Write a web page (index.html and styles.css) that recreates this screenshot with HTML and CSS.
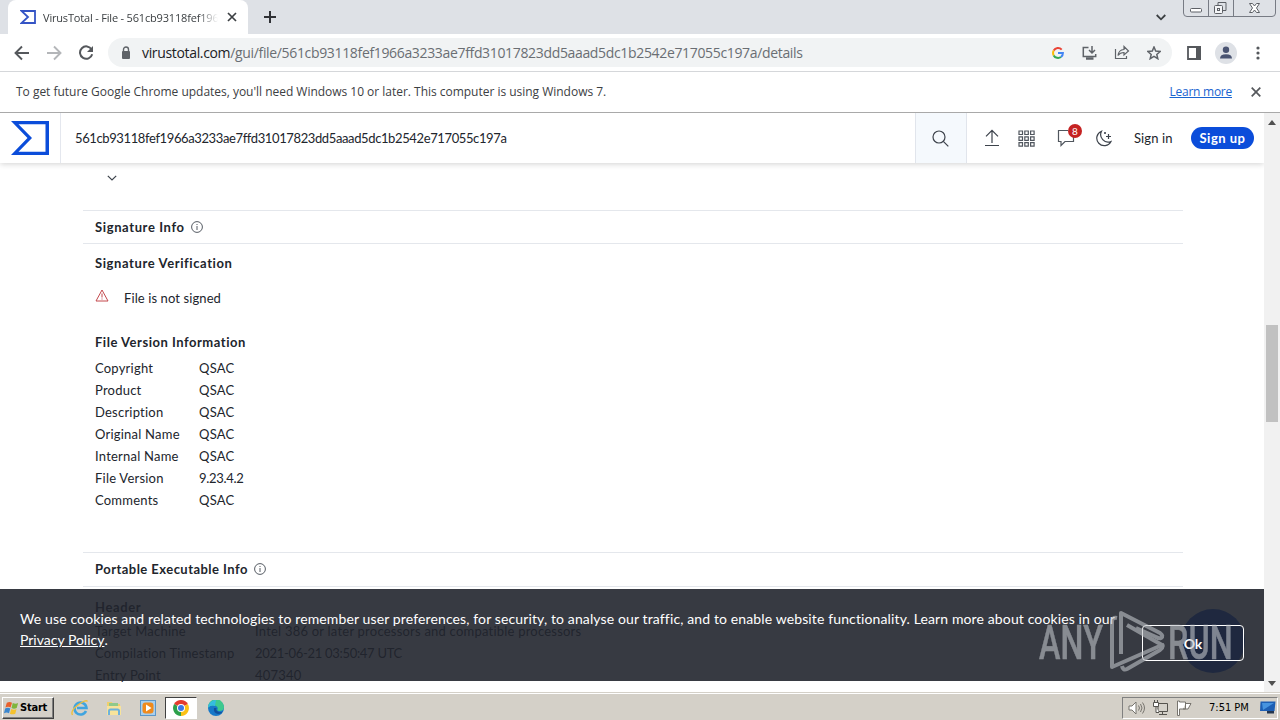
FILE: index.html
```html
<!DOCTYPE html>
<html lang="en">
<head>
  <meta charset="UTF-8">
  <title>VirusTotal - File</title>
  <meta name="viewport" content="width=device-width, initial-scale=1.0">
  <link rel="stylesheet" href="styles.css">
</head>
<body>

  <div class="tabstrip">
    <div class="tab">
      <svg class="favicon" width="16" height="14" viewBox="0 0 16 14"><path d="M1.5 1H15v12H1.5L8 7z" fill="none" stroke="#3454c5" stroke-width="1.8"/></svg>
      <span class="tab-title">VirusTotal - File - 561cb93118fef1966</span>
      <svg width="10" height="10" viewBox="0 0 10 10"><path d="M1 1l8 8M9 1L1 9" stroke="#3c4043" stroke-width="1.7"/></svg>
    </div>
    <svg class="new-tab" width="12" height="12" viewBox="0 0 12 12"><path d="M6 0v12M0 6h12" stroke="#303236" stroke-width="2"/></svg>
    <svg class="tab-search" width="10" height="7" viewBox="0 0 10 7"><path d="M.7 1L5 5.3 9.3 1" fill="none" stroke="#3c4043" stroke-width="1.8"/></svg>
    <svg class="window-buttons" width="94" height="18" viewBox="0 0 94 18" fill="none" stroke="#777b84">
      <path d="M.5 0v13q0 3.5 3.5 3.5h85q3.5 0 3.5-3.5V0M25.500 0v16M50.500 0v16"/>
      <rect x="7.500" y="8.500" width="11" height="3.500" rx="1" fill="#fff" stroke="#5d6066"/>
      <path d="M35 5V2.500h8v8h-3" stroke="#5d6066"/>
      <rect x="31.500" y="5.500" width="8" height="8" rx="1" fill="#f4f5f7" stroke="#5d6066"/>
      <rect x="34.500" y="8.500" width="2" height="2" stroke="#5d6066"/>
      <path d="M66.500 3.500h3l2 2.500 2-2.500h3l-3 4.500 3 4.500h-3l-2-2.500-2 2.500h-3l3-4.500z" fill="#fff" stroke="#5d6066"/>
    </svg>
  </div>

  <div class="toolbar">
    <svg width="16" height="16" viewBox="0 0 16 16"><path d="M15 8H2M8 1.500L1.500 8 8 14.500" fill="none" stroke="#55585c" stroke-width="1.900"/></svg>
    <svg width="16" height="16" viewBox="0 0 16 16"><path d="M1 8h13M8 1.500L14.500 8 8 14.500" fill="none" stroke="#b4b6b9" stroke-width="1.900"/></svg>
    <svg width="16" height="16" viewBox="0 0 16 16"><path d="M13.600 4.500A6.200 6.200 0 1 0 14.200 9.200" fill="none" stroke="#55585c" stroke-width="2"/><path d="M15 1v6H9z" fill="#55585c"/></svg>
    <div class="omnibox">
      <svg width="10" height="13" viewBox="0 0 10 13"><path d="M2.500 6V3.500a2.500 2.500 0 0 1 5 0V6" fill="none" stroke="#5f6368" stroke-width="1.400"/><rect x="1" y="5" width="8" height="8" rx="1" fill="#5f6368"/></svg>
      <span class="url"><b>virustotal.com</b>/gui/file/561cb93118fef1966a3233ae7ffd31017823dd5aaad5dc1b2542e717055c197a/details</span>
      <div class="omnibox-icons">
        <svg width="12" height="12" viewBox="0 0 12 12" fill="none" stroke-width="2">
          <path d="M9.700 2.600A5 5 0 0 0 1.700 3.600" stroke="#ea4335"/>
          <path d="M1.700 3.600a5 5 0 0 0 0 4.800" stroke="#fbbc05"/>
          <path d="M1.700 8.400a5 5 0 0 0 7.300 1.600" stroke="#34a853"/>
          <path d="M9 10a5 5 0 0 0 1.900-4H6" stroke="#4285f4"/>
        </svg>
        <svg width="16" height="14" viewBox="0 0 16 14" fill="none" stroke="#5f6368" stroke-width="1.500"><path d="M7.500 1.500H2.300v9h12.400V8M11 0v6.500M8 4l3 3 3-3"/><path d="M5 12.500h7.500" stroke-width="2.500"/></svg>
        <svg width="16" height="15" viewBox="0 0 16 15" fill="none" stroke="#5f6368" stroke-width="1.200"><path d="M1.500 4v9.500h11V11M4 10.500Q4.500 5 10 4.500V1.500L14.500 6 10 10V7.500Q6 7.500 4 10.500z"/></svg>
        <svg width="14" height="14" viewBox="0 0 14 14" fill="none" stroke="#5f6368" stroke-width="1.500"><path d="M7 1l1.700 4.100 4.400.400-3.300 2.900 1 4.300L7 10.400l-3.800 2.300 1-4.300L.9 5.500l4.400-.400z"/></svg>
      </div>
    </div>
    <svg class="side-panel" width="14" height="14" viewBox="0 0 14 14"><path d="M1 1h12v12H1z" fill="none" stroke="#55585c" stroke-width="1.800"/><path d="M9 0h5v14H9z" fill="#55585c"/></svg>
    <svg class="profile" width="22" height="22" viewBox="0 0 22 22"><circle cx="11" cy="11" r="11" fill="#dee1e6"/><circle cx="11" cy="7.700" r="3.200" fill="#4a5472"/><path d="M5 16.500q0-4.300 6-4.300t6 4.300z" fill="#4a5472"/></svg>
    <svg class="menu" width="4" height="14" viewBox="0 0 4 14" fill="#55585c"><circle cx="2" cy="2" r="1.600"/><circle cx="2" cy="7" r="1.600"/><circle cx="2" cy="12" r="1.600"/></svg>
  </div>

  <div class="infobar">
    <span class="infobar-text">To get future Google Chrome updates, you'll need Windows 10 or later. This computer is using Windows 7.</span>
    <a class="learn-more">Learn more</a>
    <svg width="10" height="10" viewBox="0 0 10 10"><path d="M.7.700l8.600 8.600M9.300.700L.7 9.300" stroke="#55585c" stroke-width="1.700"/></svg>
  </div>

  <div class="viewport">
    <div class="page">
      <div class="nav">
        <div class="brand">
          <svg width="38" height="34" viewBox="0 0 38 34"><path fill-rule="evenodd" d="M0 0h38v34H0l16.500-17zM7.500 3.300L21 17 7.500 30.700h27V3.300z" fill="#0b4dda"/></svg>
        </div>
        <div class="search-text">561cb93118fef1966a3233ae7ffd31017823dd5aaad5dc1b2542e717055c197a</div>
        <div class="search-button">
          <svg width="17" height="17" viewBox="0 0 17 17" fill="none" stroke="#3d434c" stroke-width="1.200"><circle cx="7" cy="7" r="6"/><path d="M11.300 11.300l5 5"/></svg>
        </div>
        <svg class="upload" width="16" height="18" viewBox="0 0 16 18" fill="none" stroke="#3d434c" stroke-width="1.200"><path d="M8 14V1.500M2 7.300l6-6 6 6M1 16.500h14"/></svg>
        <svg class="apps" width="17" height="17" viewBox="0 0 17 17" fill="none" stroke="#50565e" stroke-width="1.200">
          <path d="M1 1h3.500v3.500H1zM6.800 1h3.500v3.500H6.800zM12.600 1h3.500v3.500h-3.500zM1 6.800h3.500v3.500H1zM6.800 6.800h3.500v3.500H6.800zM12.600 6.800h3.500v3.500h-3.500zM1 12.600h3.500v3.500H1zM6.800 12.600h3.500v3.500H6.800zM12.600 12.600h3.500v3.500h-3.500z"/>
        </svg>
        <div class="comments">
          <svg width="18" height="18" viewBox="0 0 18 18" fill="none" stroke="#50565e" stroke-width="1.200"><path d="M11 1.500H1.500v11H4V16.500l4-4h8.500V8"/></svg>
          <span class="badge">8</span>
        </div>
        <svg class="theme" width="17" height="17" viewBox="0 0 17 17" fill="none" stroke="#3d434c" stroke-width="1.200"><path d="M6.500 1.200A7.500 7.500 0 1 0 16 11.500 7.500 7.500 0 0 1 6.500 1.200z"/><path d="M13.500 4v5M11 6.500h5M10 2v2M9 3h2"/></svg>
        <span class="sign-in">Sign in</span>
        <span class="sign-up">Sign up</span>
      </div>

      <div class="details">
        <div class="expand">
          <svg width="10" height="6" viewBox="0 0 10 6"><path d="M.8.800L5 5 9.200.800" fill="none" stroke="#3d434c" stroke-width="1.200"/></svg>
        </div>

        <div class="section-title">
          <span>Signature Info</span>
          <svg width="12" height="12" viewBox="0 0 12 12" fill="none" stroke="#555b63"><circle cx="6" cy="6" r="5.400"/><path d="M6 5v4M6 3v1"/></svg>
        </div>
        <h4 class="verification">Signature Verification</h4>
        <div class="unsigned">
          <svg width="14" height="13" viewBox="0 0 14 13" fill="none" stroke="#c4494d"><path d="M7 1l6 11H1zM7 4.500v4M7 9.500v1"/></svg>
          <span>File is not signed</span>
        </div>

        <h4 class="version">File Version Information</h4>
        <dl class="info">
          <dt>Copyright</dt><dd>QSAC</dd>
          <dt>Product</dt><dd>QSAC</dd>
          <dt>Description</dt><dd>QSAC</dd>
          <dt>Original Name</dt><dd>QSAC</dd>
          <dt>Internal Name</dt><dd>QSAC</dd>
          <dt>File Version</dt><dd class="number">9.23.4.2</dd>
          <dt>Comments</dt><dd>QSAC</dd>
        </dl>

        <div class="section-title portable">
          <span>Portable Executable Info</span>
          <svg width="12" height="12" viewBox="0 0 12 12" fill="none" stroke="#555b63"><circle cx="6" cy="6" r="5.400"/><path d="M6 5v4M6 3v1"/></svg>
        </div>
        <h4 class="header">Header</h4>
        <dl class="info wide">
          <dt>Target Machine</dt><dd>Intel 386 or later processors and compatible processors</dd>
          <dt>Compilation Timestamp</dt><dd class="number">2021-06-21 03:50:47 UTC</dd>
          <dt>Entry Point</dt><dd>407340</dd>
        </dl>
      </div>

      <div class="chat-button"></div>
      <div class="cookies">
        <p>We use cookies and related technologies to remember user preferences, for security, to analyse our traffic, and to enable website functionality. Learn more about cookies in our<br><a>Privacy Policy</a>.</p>
        <button>Ok</button>
      </div>
      <svg class="watermark" width="200" height="68" viewBox="0 0 200 68">
        <g class="watermark-text">
          <text x="3" y="51" textLength="64" lengthAdjust="spacingAndGlyphs">ANY</text>
          <text x="132" y="51" textLength="65" lengthAdjust="spacingAndGlyphs">RUN</text>
        </g>
        <g fill="none" stroke="#bfc3c8" stroke-width="4" stroke-linejoin="round">
          <path d="M81 10q-5-1-5 4v45l50-22-35-20"/>
          <path d="M85 46V5l39 20q4 3 1 5-2 1-5-1l-20-9"/>
          <path d="M86 58q1 5 5 3l33-19q4-3 2-6"/>
        </g>
      </svg>
    </div>
    <div class="scrollbar">
      <svg width="8" height="5" viewBox="0 0 8 5"><path d="M4 0l4 5H0z" fill="#505050"/></svg>
      <div class="thumb"></div>
      <svg width="8" height="5" viewBox="0 0 8 5"><path d="M0 0h8L4 5z" fill="#505050"/></svg>
    </div>
  </div>

  <div class="taskbar">
    <div class="start">
      <svg width="16" height="16" viewBox="0 0 17 17">
        <path d="M3 3q3-2 5.500 0L7 8Q4.500 6.500 1.500 8z" fill="#e8602c"/>
        <path d="M9.300 3.300q3 1.500 5.700 0L13.500 8.500q-3 1.500-5.500 0z" fill="#7fb53c"/>
        <path d="M1.200 9q3-1.500 5.500 0L5.300 14Q3 12.500 0 14z" fill="#3a86cf"/>
        <path d="M7.700 9.500q3 1.500 5.600 0L12 14.500q-3 1.500-5.700 0z" fill="#f5c22e"/>
      </svg>
      <span>Start</span>
    </div>
    <div class="launcher">
      <svg width="18" height="18" viewBox="0 0 18 18"><path d="M15 12A6 6 0 1 1 15.500 9H6" fill="none" stroke="#3fa4df" stroke-width="2.600"/><path d="M1.500 16Q-1 12 7 6t9.500-3.500" fill="none" stroke="#eebf3c" stroke-width="1.400"/></svg>
    </div>
    <div class="launcher">
      <svg width="16" height="16" viewBox="0 0 16 16"><path d="M1 2h5l1 2h7v11H1z" fill="#f0cf6c"/><path d="M3 3h9v4H3z" fill="#8fc98a"/><path d="M1 6h14v9H1z" fill="#f8e39b"/><path d="M3 15v-4q0-1.500 1.500-1.500h7Q13 9.500 13 11v4" fill="none" stroke="#6db2dc" stroke-width="2"/></svg>
    </div>
    <div class="launcher">
      <svg width="16" height="16" viewBox="0 0 16 16"><rect x=".5" y=".5" width="15" height="15" fill="#a8cfee" stroke="#5c97c9"/><rect x="2.500" y="2.500" width="11" height="11" rx="3" fill="#f08a1c"/><path d="M6 4.500v7L11.500 8z" fill="#fff"/></svg>
    </div>
    <div class="launcher active">
      <svg width="16" height="16" viewBox="0 0 16 16"><path d="M8 8L1.100 4A8 8 0 0 1 14.900 4z" fill="#e33b2e"/><path d="M8 8l6.900-4A8 8 0 0 1 8 16z" fill="#fbc116"/><path d="M8 8v8A8 8 0 0 1 1.100 4z" fill="#2da04b"/><circle cx="8" cy="8" r="4" fill="#fff"/><circle cx="8" cy="8" r="3" fill="#3b78e7"/></svg>
    </div>
    <div class="launcher">
      <svg width="16" height="16" viewBox="0 0 16 16"><circle cx="8" cy="8" r="8" fill="#1778c8"/><path d="M0 7.500A8 8 0 0 1 16 7q0 4-4.500 4-2.500 0-2-1.500Q10.500 7 7.500 5.800 3 4.500 0 7.500z" fill="#3ec98e"/><path d="M0 7.500A8 8 0 0 1 8 0L7 6Q3 4.500 0 7.500z" fill="#35bce0"/><path d="M6 8q-1 5 4 6 3 0 5-2.500-4 1.500-6-.5Q7.500 9.500 8.500 8z" fill="#124f9b"/></svg>
    </div>
    <div class="tray">
      <svg width="17" height="14" viewBox="0 0 17 14" stroke="#77746e"><path d="M1 5h3l4-4v12L4 9H1z" fill="#fff"/><path d="M10.500 4.500q2 2.500 0 5M12.500 3q3 4 0 8M14.500 1.500q4 5.500 0 11" fill="none"/></svg>
      <svg width="17" height="16" viewBox="0 0 17 16" stroke="#55534e"><path d="M6 3.500h9.500v8H6z" fill="#d5d2cb"/><path d="M7 14.500h8M10.500 12v2" fill="none"/><path d="M1.500 2.500h5v4h-5zM2.500 0v2M5.500 0v2M4 7v5.500h3" fill="#fff"/></svg>
      <svg width="16" height="16" viewBox="0 0 16 16" stroke="#77746e"><path d="M1.500 1v14.500h2V9h6V2h-6V1zM9.500 3.500h5.500L12 9H7" fill="#fff"/></svg>
      <span class="clock">7:51 PM</span>
      <svg width="16" height="13" viewBox="0 0 16 13"><path d="M.5.500h15l-1 9.500H0z" fill="#1d5fb4"/><path d="M2 2h12L3 9z" fill="#4794df"/><path d="M7 10h7v2.500H7z" fill="#24364f"/></svg>
    </div>
  </div>

</body>
</html>
```
FILE: styles.css
```css
* {
  box-sizing: border-box;
}

body {
  width: 1280px;
  height: 720px;
  margin: 0;
  overflow: hidden;
  display: flex;
  flex-direction: column;
  background: #fff;
  font-family: "Open Sans", "Noto Sans", sans-serif;
  color: #202124;
}

svg {
  display: block;
  flex: none;
}

/* browser frame */

.tabstrip {
  height: 34px;
  display: flex;
  align-items: center;
  padding-left: 8px;
  background: #dee1e6;
  flex: none;
}

.tab {
  width: 240px;
  height: 34px;
  display: flex;
  align-items: center;
  padding: 0 11px 0 12px;
  background: #fff;
  border-radius: 8px 8px 0 0;
}

.tab-title {
  width: 175px;
  margin: 0 9px 0 7px;
  overflow: hidden;
  white-space: nowrap;
  font-size: 11px;
  letter-spacing: -0.18px;
  color: #3c4043;
  -webkit-mask-image: linear-gradient(to right, #000 155px, transparent);
  mask-image: linear-gradient(to right, #000 155px, transparent);
}

.new-tab {
  margin-left: 16px;
}

.tab-search {
  margin-left: auto;
  margin-right: 17px;
}

.window-buttons {
  align-self: flex-start;
  margin-right: 3px;
}

.toolbar {
  height: 38px;
  flex: none;
  display: flex;
  align-items: center;
  gap: 16px;
  padding-left: 14px;
  border-bottom: 1px solid #d5d7da;
}

.omnibox {
  width: 1064px;
  height: 29px;
  margin-left: -2px;
  display: flex;
  align-items: center;
  padding: 0 11px 0 13px;
  border-radius: 15px;
  background: #f1f3f4;
}

.url {
  margin-left: 11px;
  font-size: 14px;
  letter-spacing: -0.34px;
  white-space: nowrap;
  color: #6a6e73;
}

.url b {
  font-weight: normal;
  color: #202124;
}

.omnibox-icons {
  margin-left: auto;
  display: flex;
  align-items: center;
  gap: 17px;
}

.side-panel {
  margin-left: -1px;
}

.profile {
  margin-left: -2px;
}

.menu {
  margin-left: 3px;
}

.infobar {
  height: 41px;
  flex: none;
  display: flex;
  align-items: center;
  padding: 0 19px 0 16px;
  border-bottom: 1px solid #a9a9a9;
  font-size: 12px;
}

.infobar-text {
  margin-bottom: 2px;
  white-space: nowrap;
  letter-spacing: -0.02px;
  color: #3c4043;
}

.learn-more {
  margin: 0 19px 2px auto;
  letter-spacing: -0.25px;
  color: #1a64d0;
  text-decoration: underline;
}

/* VirusTotal page */

.viewport {
  height: 579px;
  flex: none;
  display: flex;
}

.page {
  position: relative;
  width: 1264px;
  height: 579px;
  overflow: hidden;
  font-family: Lato, "Open Sans", sans-serif;
  font-size: 13px;
  letter-spacing: 0.22px;
  color: #21252c;
}

.nav {
  height: 50px;
  display: flex;
  align-items: center;
  background: #fff;
  box-shadow: 0 1px 6px rgba(0, 0, 0, 0.18);
}

.brand {
  width: 61px;
  height: 50px;
  padding: 8px 0 0 11px;
  border-right: 1px solid #e4e7ee;
}

.search-text {
  width: 854px;
  padding-left: 14px;
  letter-spacing: -0.38px;
}

.search-button {
  width: 52px;
  height: 50px;
  display: flex;
  align-items: center;
  justify-content: center;
  padding-right: 2px;
  background: #f5f9fd;
  border: 1px solid #e1e5ec;
  border-width: 0 1px;
}

.upload {
  margin-left: 17px;
}

.apps {
  margin-left: 18px;
}

.comments {
  position: relative;
  margin-left: 22px;
}

.badge {
  position: absolute;
  left: 11px;
  top: -5px;
  width: 14px;
  height: 14px;
  border-radius: 50%;
  background: #c52222;
  color: #fff;
  font-size: 10px;
  line-height: 14px;
  text-align: center;
}

.theme {
  margin-left: 20px;
}

.sign-in {
  margin-left: 22px;
  width: 39px;
  white-space: nowrap;
  letter-spacing: 0.1px;
}

.sign-up {
  width: 63px;
  height: 22px;
  margin-left: 18px;
  border-radius: 11px;
  background: #0b4dda;
  color: #fff;
  font-weight: bold;
  letter-spacing: 0.5px;
  line-height: 22px;
  text-align: center;
}

.details {
  width: 1100px;
  margin-left: 83px;
}

.expand {
  height: 47px;
  padding: 12px 0 0 24px;
}

.section-title {
  height: 34px;
  display: flex;
  align-items: center;
  gap: 6px;
  padding: 0 0 1px 12px;
  border: 1px solid #e4e7ec;
  border-width: 1px 0;
  font-weight: bold;
  letter-spacing: 0.62px;
}

.details h4 {
  margin: 0;
  padding-left: 12px;
  font-size: 13px;
  letter-spacing: 0.6px;
}

.details .verification {
  line-height: 39px;
}

.unsigned {
  height: 31px;
  display: flex;
  align-items: center;
  gap: 14px;
  padding: 0 0 1px 12px;
  letter-spacing: 0.1px;
}

.unsigned svg {
  margin-bottom: 6px;
}

.unsigned span {
  margin-left: 1px;
}

.details .version {
  margin-top: 13px;
  line-height: 31px;
  letter-spacing: 0.52px;
}

.info {
  display: grid;
  grid-template-columns: 104px 1fr;
  grid-auto-rows: 22px;
  margin: 0 0 40px;
  padding-left: 12px;
  line-height: 20px;
}

.info dd {
  margin: 0;
}

.info .number {
  letter-spacing: -0.3px;
}

.portable {
  height: 35px;
  letter-spacing: 0.46px;
}

.details .header {
  padding-top: 6px;
  line-height: 28px;
}

.wide {
  grid-template-columns: 160px 1fr;
  line-height: 21px;
}

.chat-button {
  position: absolute;
  left: 1181px;
  top: 496px;
  width: 64px;
  height: 64px;
  border-radius: 50%;
  background: #0b4dda;
}

.cookies {
  position: absolute;
  left: 0;
  top: 476px;
  width: 1264px;
  height: 92px;
  background: rgba(33, 37, 45, 0.9);
  color: #fff;
}

.cookies p {
  margin: 0;
  padding: 19px 0 0 20px;
  white-space: nowrap;
  font-size: 14px;
  letter-spacing: 0.125px;
  line-height: 21px;
}

.cookies a {
  letter-spacing: 0;
  text-decoration: underline;
}

.cookies button {
  position: absolute;
  left: 1142px;
  top: 36px;
  width: 102px;
  height: 36px;
  border: 1px solid #fff;
  border-radius: 4px;
  background: none;
  color: #fff;
  font: bold 14px Lato, sans-serif;
}

.watermark {
  position: absolute;
  left: 1036px;
  top: 495px;
  opacity: 0.6;
}

.watermark-text {
  font: 500 49px Roboto, sans-serif;
  fill: #bfc3c8;
  stroke: #bfc3c8;
  stroke-width: 0.5px;
}

.scrollbar {
  width: 16px;
  height: 579px;
  display: flex;
  flex-direction: column;
  align-items: center;
  padding: 7px 0 6px;
  background: #f1f1f1;
}

.thumb {
  width: 12px;
  height: 97px;
  margin: 200px 0 auto;
  background: #c1c1c1;
}

/* Windows taskbar */

.taskbar {
  height: 28px;
  flex: none;
  display: flex;
  align-items: center;
  padding: 2px 2px 0;
  background: #d4d0c8;
  border-top: 1px solid #d4d0c8;
  box-shadow: inset 0 1px #fff;
}

.start {
  width: 52px;
  height: 22px;
  margin-right: 10px;
  display: flex;
  align-items: center;
  padding-left: 1px;
  border: 1px solid;
  border-color: #fff #404040 #404040 #fff;
  box-shadow: inset -1px -1px #808080;
  font: bold 11px "DejaVu Sans Condensed", sans-serif;
  letter-spacing: -0.2px;
  color: #000;
}

.launcher {
  width: 32px;
  height: 22px;
  margin-right: 2px;
  display: flex;
  align-items: center;
  justify-content: center;
}

.active {
  margin-left: -1px;
  margin-right: 3px;
  background: #fff;
  border: 1px solid;
  border-color: #404040 #fff #fff #404040;
}

.tray {
  width: 156px;
  height: 22px;
  margin-left: auto;
  display: flex;
  align-items: center;
  gap: 7px;
  padding-left: 5px;
  border: 1px solid;
  border-color: #808080 #fff #fff #808080;
}

.clock {
  margin: 0 4px 0 10px;
  font: 11px "DejaVu Sans Condensed", sans-serif;
  color: #000;
  white-space: nowrap;
}
```
